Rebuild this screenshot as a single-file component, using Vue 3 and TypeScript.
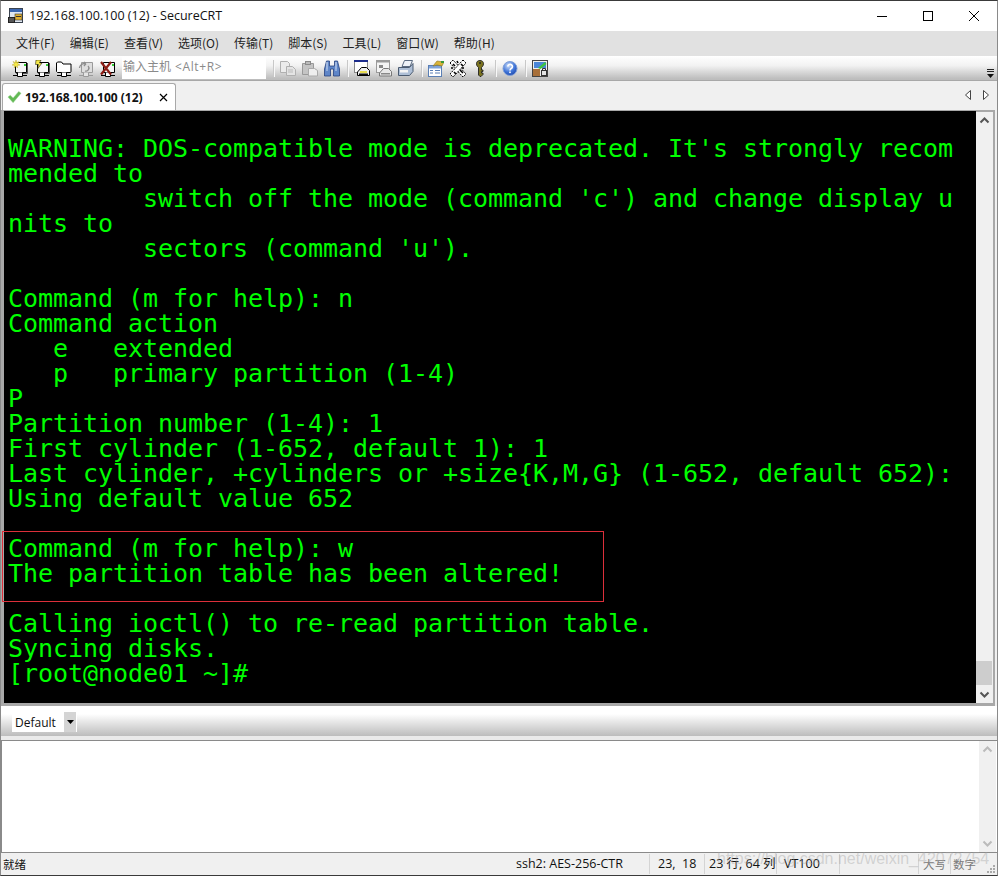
<script setup lang="ts">
const lines: string[] = [
  '',
  "WARNING: DOS-compatible mode is deprecated. It's strongly recom",
  'mended to',
  "         switch off the mode (command 'c') and change display u",
  'nits to',
  "         sectors (command 'u').",
  '',
  'Command (m for help): n',
  'Command action',
  '   e   extended',
  '   p   primary partition (1-4)',
  'P',
  'Partition number (1-4): 1',
  'First cylinder (1-652, default 1): 1',
  'Last cylinder, +cylinders or +size{K,M,G} (1-652, default 652):',
  'Using default value 652',
  '',
  'Command (m for help): w',
  'The partition table has been altered!',
  '',
  'Calling ioctl() to re-read partition table.',
  'Syncing disks.',
  '[root@node01 ~]#',
]
const menus = ['文件(F)', '编辑(E)', '查看(V)', '选项(O)', '传输(T)', '脚本(S)', '工具(L)', '窗口(W)', '帮助(H)']
</script>

<template>
  <div class="win">
    <header class="title">
      <svg class="appicon" width="16" height="16" viewBox="0 0 16 16">
        <rect x="1.5" y="0.5" width="13" height="14" fill="#dfe6ef" stroke="#39424f" />
        <rect x="2" y="1" width="12" height="3" fill="#3a66b0" />
        <rect x="7" y="6" width="7" height="6" fill="#e0b030" stroke="#333" stroke-width="0.6" />
        <rect x="8" y="8" width="5" height="1" fill="#333" />
        <rect x="0.5" y="9.5" width="6" height="5" fill="#555" stroke="#222" />
      </svg>
      <span class="title-text">192.168.100.100 (12) - SecureCRT</span>
      <div class="winbtns">
        <svg width="46" height="30" viewBox="0 0 46 30"><path d="M18 15.5h10" stroke="#000" /></svg>
        <svg width="46" height="30" viewBox="0 0 46 30"><rect x="18.5" y="10.5" width="9" height="9" fill="none" stroke="#000" /></svg>
        <svg width="46" height="30" viewBox="0 0 46 30"><path d="M18 10l10 10M28 10l-10 10" stroke="#000" /></svg>
      </div>
    </header>

    <nav class="menu">
      <span v-for="m in menus" :key="m" class="menu-item">{{ m }}</span>
    </nav>

    <div class="toolbar">
      <div class="group first">
        <svg class="tool" viewBox="0 0 16 17">
          <path d="M3.500 2.500h11v10h-11z" fill="#f6f6f6" stroke="#000" />
          <path d="M15.500 3v10.500H4" fill="none" stroke="#555" />
          <rect x="12" y="4" width="2" height="2" fill="#33cc33" />
          <path d="M1 15.500h14" stroke="#000" />
          <path d="M5.500 12.500v4h5v-4" fill="#fff" stroke="#000" />
          <path d="M4 0l.8 2.600L7 1.500 5.600 3.800 8 5 5.400 5.400 5.500 8 4 6 2.200 8l.3-2.600L0 5l2.500-1.200L1 1.500l2.200 1.100z" fill="#f6ea4a" stroke="#b09a20" stroke-width="0.400" />
        </svg>
        <svg class="tool" viewBox="0 0 16 17">
          <path d="M3.500 2.500h11v10h-11z" fill="#f6f6f6" stroke="#000" />
          <path d="M15.500 3v10.500H4" fill="none" stroke="#555" />
          <rect x="12" y="4" width="2" height="2" fill="#33cc33" />
          <path d="M1 15.500h14" stroke="#000" />
          <path d="M5.500 12.500v4h5v-4" fill="#fff" stroke="#000" />
          <path d="M2 0h5L5.500 3H8L3.500 9 4.500 4.500H1.500z" fill="#f6ea4a" stroke="#000" stroke-width="0.500" />
        </svg>
        <svg class="tool" viewBox="0 0 16 17">
          <path d="M.5 11.500v-8.500l1-1h4l1.500 2h8v7.500a1 1 0 0 1-1 1H1.500z" fill="#fff" stroke="#000" />
          <path d="M1 15.500h14" stroke="#000" />
          <path d="M5.500 12.500v4h5v-4" fill="#fff" stroke="#000" />
        </svg>
        <svg class="tool" viewBox="0 0 16 17">
          <path d="M3.500 2.500h11v10h-11z" fill="#dedede" stroke="#9a9a9a" />
          <path d="M1 15.500h14" stroke="#9a9a9a" />
          <path d="M5.500 12.500v4h5v-4" fill="#e4e4e4" stroke="#9a9a9a" />
          <path d="M1.500 8a4.500 4.500 0 0 1 6-4M8 3.500l-2-1.500M8 3.500L6 6M7 11a3 3 0 0 0 3-5" fill="none" stroke="#8c8c8c" stroke-width="1.300" />
        </svg>
        <svg class="tool" viewBox="0 0 16 17">
          <path d="M3.500 2.500h11v10h-11z" fill="#f6f6f6" stroke="#000" />
          <rect x="12" y="4" width="2" height="2" fill="#33cc33" />
          <path d="M1 15.500h14" stroke="#000" />
          <path d="M5.500 12.500v4h5v-4" fill="#fff" stroke="#000" />
          <path d="M1 2l10 12.500M11 2L1 14.500" stroke="#8c1c14" stroke-width="2.200" />
        </svg>
      </div>
      <div class="quick"><span>输入主机</span><span class="hint">&lt;Alt+R&gt;</span></div>
      <div class="group rest">
        <i class="sep" />
        <svg class="tool" viewBox="0 0 16 17">
          <path d="M.5 1.500h7l2 2v9H.5z" fill="#ececec" stroke="#b0b0b0" />
          <path d="M6.500 6.500h6l3 3v6h-9z" fill="#e4e4e4" stroke="#b0b0b0" />
          <path d="M8 10h5M8 12h5" stroke="#bbb" />
        </svg>
        <svg class="tool" viewBox="0 0 16 17">
          <path d="M.5 3.500h11v11H.5z" fill="#c4c4c4" stroke="#999" />
          <rect x="3.500" y="1.500" width="5" height="3" fill="#bbb" stroke="#8a8a8a" />
          <path d="M6.500 8.500h6l3 2v5.500h-9z" fill="#eee" stroke="#aaa" />
        </svg>
        <svg class="tool" viewBox="0 0 16 17">
          <path d="M2.500 1h3v5h5V1h3l2 8v7H9.500V9h-3v7H.5V9z" fill="#5f86c8" stroke="#27417e" stroke-width="0.800" />
          <path d="M3 2v7M12 2v7M2 10h2M11 10h2" stroke="#c8d8f0" stroke-width="1.200" />
        </svg>
        <i class="sep" />
        <svg class="tool" viewBox="0 0 16 17">
          <rect x=".5" y="1.500" width="13" height="11" fill="#fff" stroke="#8a8a8a" />
          <rect x="0" y="0" width="14" height="2" fill="#1c2c8c" />
          <path d="M7.500 7.500h5l3 3v5h-12v-3.500z" fill="#efefef" stroke="#000" />
          <rect x="6" y="11" width="7" height="2" fill="#e8dc50" />
          <rect x="5" y="13.500" width="9" height="1.500" fill="#111" />
        </svg>
        <svg class="tool" viewBox="0 0 16 17">
          <rect x=".5" y="1.500" width="13" height="11" fill="#f4f4f4" stroke="#9a9a9a" />
          <rect x="0" y="0" width="14" height="2.500" fill="#9a9a9a" />
          <rect x="3" y="5" width="4" height="3" fill="#888" />
          <path d="M7.500 8.500h5l3 3v4.500h-12v-3z" fill="#e8e8e8" stroke="#777" />
          <rect x="5" y="13" width="9" height="1.500" fill="#888" />
        </svg>
        <svg class="tool" viewBox="0 0 16 17">
          <path d="M6.500 .5h8l-2.500 6H4z" fill="#eef2f8" stroke="#5a6a80" />
          <path d="M.5 7.500h11l3.500-4v8l-3.500 4h-11z" fill="#aebfd6" stroke="#4a5a70" />
          <rect x="2" y="10" width="8" height="2.500" fill="#f4f4f4" />
        </svg>
        <i class="sep" />
        <svg class="tool" viewBox="0 0 16 17">
          <rect x=".5" y="5.500" width="13" height="11" fill="#fff" stroke="#5a7fb5" />
          <rect x="1" y="6" width="12" height="2.500" fill="#7fa3d8" />
          <path d="M2 10.500h3M7 10.500h5M2 13h3M7 13h5" stroke="#5a7fb5" />
          <path d="M5 6l4-5 7 1-2 4-5-1z" fill="#d9b437" stroke="#8c7420" stroke-width="0.600" />
          <rect x="13" y="1" width="3" height="2" fill="#3a9a3a" />
        </svg>
        <svg class="tool" viewBox="0 0 16 17">
          <path d="M0 3l3-3 13 14-3 3z" fill="#fff" stroke="#000" stroke-dasharray="2 1" />
          <path d="M13 0l3 3L3 17l-3-3z" fill="#fff" stroke="#000" stroke-dasharray="2 1" />
          <path d="M3 4l2 2M11 4l2 2M4 12l2 2M10 10l3 3M7 1l1 2M1 8h2M12 8h2" stroke="#000" stroke-width="1.600" />
        </svg>
        <svg class="tool" viewBox="0 0 16 17">
          <path d="M8 .5c2.200 0 3.500 1.300 3.500 3.300S10 7 9.500 7.500V10H11v1.500H9.500V13H11v1.500l-2 2H8L6.500 15V7.500C6 7 4.500 6 4.500 3.800S5.800.5 8 .5z" fill="#7c7420" stroke="#222" stroke-width="0.900" />
          <circle cx="8" cy="3" r="1" fill="#222" />
        </svg>
        <i class="sep" />
        <svg class="tool" viewBox="0 0 16 17">
          <defs>
            <radialGradient id="hb" cx="40%" cy="30%" r="75%">
              <stop offset="0" stop-color="#cfe0fa" />
              <stop offset="0.600" stop-color="#3f74d8" />
              <stop offset="1" stop-color="#1e46a8" />
            </radialGradient>
          </defs>
          <circle cx="8" cy="8.500" r="7" fill="url(#hb)" stroke="#7f9fd8" />
          <path d="M5.800 6.500a2.300 2.200 0 1 1 3.400 2c-.8.500-1.200 1-1.200 2" fill="none" stroke="#fff" stroke-width="1.600" />
          <rect x="7.200" y="11.500" width="1.600" height="1.600" fill="#fff" />
        </svg>
        <i class="sep" />
        <svg class="tool" viewBox="0 0 16 17">
          <rect x=".5" y=".5" width="15" height="16" fill="#eee" stroke="#444" />
          <rect x="2" y="2" width="12" height="6" fill="#4a86d8" />
          <path d="M6 8l7-6 1.500 2-6 5z" fill="#3ec43e" />
          <rect x="1" y="9" width="7" height="7" fill="#a8703a" />
          <rect x="9.500" y="10.500" width="5" height="5" fill="#e4e4e4" stroke="#333" />
          <path d="M10.500 10.500v-2h3v2" fill="none" stroke="#333" />
        </svg>
      </div>
      <svg class="chevron" width="9" height="12" viewBox="0 0 9 12">
        <path d="M1 1.500h7M1 3.500h7" stroke="#222" />
        <path d="M1 6h7l-3.500 4z" fill="#111" />
      </svg>
    </div>

    <div class="tabs">
      <div class="tab">
        <svg width="15" height="14" viewBox="0 0 16 14">
          <path d="M1 7l2.500-2 3 3 6-7L15 3 6.500 13z" fill="#62b954" stroke="#9bd591" stroke-width="0.500" />
        </svg>
        <span class="tab-label">192.168.100.100 (12)</span>
        <svg class="tab-x" width="9" height="9" viewBox="0 0 9 9"><path d="M1 1l7 7M8 1L1 8" stroke="#000" stroke-width="1.200" /></svg>
      </div>
      <div class="tab-nav">
        <svg width="8" height="11" viewBox="0 0 8 11"><path d="M6.500 .5v9l-5-4.500z" fill="#fff" stroke="#444" /></svg>
        <svg width="8" height="11" viewBox="0 0 8 11"><path d="M1.500 .5v9l5-4.500z" fill="#fff" stroke="#444" /></svg>
      </div>
    </div>

    <section class="term-frame">
      <pre class="term"><template v-for="(l, i) in lines" :key="i">{{ l }}
</template></pre>
      <div class="scroll">
        <svg width="17" height="17" viewBox="0 0 17 17"><path d="M4.500 10.500l4-4 4 4" fill="none" stroke="#555" stroke-width="2" /></svg>
        <div class="track"><div class="thumb" /></div>
        <svg width="17" height="17" viewBox="0 0 17 17"><path d="M4.500 6.500l4 4 4-4" fill="none" stroke="#555" stroke-width="2" /></svg>
      </div>
      <div class="mark" />
    </section>

    <div class="session-bar">
      <div class="combo">
        <span>Default</span>
        <span class="combo-btn"><svg width="7" height="4" viewBox="0 0 7 4"><path d="M0 0h7L3.500 4z" fill="#000" /></svg></span>
      </div>
    </div>

    <section class="input">
      <div class="scroll light">
        <svg width="17" height="17" viewBox="0 0 17 17"><path d="M4.500 10.500l4-4 4 4" fill="none" stroke="#bbb" stroke-width="2" /></svg>
        <div class="track" />
        <svg width="17" height="17" viewBox="0 0 17 17"><path d="M4.500 6.500l4 4 4-4" fill="none" stroke="#bbb" stroke-width="2" /></svg>
      </div>
    </section>

    <footer class="status">
      <span class="st-main">就绪</span>
      <span class="cell c1">ssh2: AES-256-CTR</span>
      <span class="cell c2">23,&nbsp; 18</span>
      <span class="cell c3">23 行, 64 列</span>
      <span class="cell c4">VT100</span>
      <span class="cell c5" />
      <span class="cell c6 dim">大写</span>
      <span class="cell c7 dim">数字</span>
      <svg class="grip" width="12" height="12" viewBox="0 0 12 12">
        <path d="M9 2h2v2H9zM6 5h2v2H6zM9 5h2v2H9zM3 8h2v2H3zM6 8h2v2H6zM9 8h2v2H9z" fill="#aaa" />
      </svg>
      <span class="watermark">https://blog.csdn.net/weixin_42072754</span>
    </footer>
  </div>
</template>

<style>
html, body { margin: 0; background: #f0f0f0; }
</style>

<style scoped>
.win {
  width: 998px;
  height: 876px;
  box-sizing: border-box;
  display: flex;
  flex-direction: column;
  overflow: hidden;
  background: #f0f0f0;
  border: 1px solid #8a8a8a;
  border-top-color: #3a3a3a;
  border-bottom-color: #3a3a3a;
  font-family: "Noto Sans CJK SC", "Noto Sans", sans-serif;
  font-size: 12px;
  color: #222;
}
.title {
  height: 30px;
  flex: none;
  display: flex;
  align-items: center;
  padding-left: 7px;
  background: #fff;
}
.appicon { flex: none; }
.title-text {
  margin: -2px 0 0 5px;
  font-family: "Open Sans", sans-serif;
  font-size: 12.5px;
  color: #111;
}
.winbtns { margin-left: auto; display: flex; }
.menu {
  height: 25px;
  flex: none;
  display: flex;
  align-items: center;
  padding: 0 0 2px 15px;
  box-sizing: border-box;
  gap: 15px;
  background: #e1e1e1;
}
.menu-item { font-size: 12px; color: #222; white-space: nowrap; }
.toolbar {
  height: 25px;
  flex: none;
  box-sizing: border-box;
  position: relative;
  display: flex;
  align-items: center;
  padding-left: 11px;
  background: linear-gradient(#fff 0%, #f2f2f2 40%, #bdbdbd 95%);
  border-bottom: 1px solid #a8a8a8;
}
.group { display: flex; align-items: center; gap: 6px; }
.rest { margin-left: 6px; }
.tool { width: 16px; height: 17px; flex: none; }
.quick {
  width: 144px;
  height: 22px;
  margin-left: 6px;
  padding-left: 1px;
  box-sizing: border-box;
  background: #fff;
  color: #8a8a8a;
  font-size: 12px;
  line-height: 18px;
  white-space: nowrap;
}
.hint { margin-left: 4px; font-family: "Open Sans", sans-serif; font-size: 12px; letter-spacing: 0.6px; }
.sep {
  width: 1px;
  height: 17px;
  background: #c8c8c8;
  border-right: 1px solid #f8f8f8;
  margin: 0 -1px 0 1px;
}
.chevron { position: absolute; right: 2px; bottom: 0; }
.tabs {
  height: 29px;
  flex: none;
  display: flex;
  align-items: flex-end;
  padding: 0 0 0 1px;
  background: #f0f0f0;
}
.tab {
  width: 174px;
  height: 27px;
  box-sizing: border-box;
  display: flex;
  align-items: center;
  padding-left: 4px;
  gap: 3px;
  background: #fff;
  border: 1px solid #a8a8a8;
  border-bottom: 0;
  border-radius: 3px 3px 0 0;
}
.tab-label {
  font-family: "Open Sans", sans-serif;
  font-weight: 700;
  font-size: 12px;
  color: #111;
  white-space: nowrap;
}
.tab-x { margin-left: auto; margin-right: 7px; }
.tab-nav {
  margin-left: auto;
  align-self: center;
  display: flex;
  gap: 10px;
  padding-right: 7px;
}
.term-frame {
  height: 596px;
  flex: none;
  box-sizing: border-box;
  position: relative;
  display: flex;
  background: #000;
  border: 2px solid #a8a8a8;
  border-left-width: 3px;
  border-bottom-width: 3px;
  margin-right: 2px;
}
.term {
  flex: 1;
  margin: -1px 0 0;
  padding: 0 0 0 4px;
  overflow: hidden;
  background: #000;
  color: #00ff00;
  font-family: "DejaVu Sans Mono", monospace;
  font-size: 25px;
  line-height: 25px;
  letter-spacing: -0.05px;
  white-space: pre;
}
.scroll {
  width: 17px;
  flex: none;
  display: flex;
  flex-direction: column;
  background: #f0f0f0;
}
.track { flex: 1; position: relative; }
.thumb {
  position: absolute;
  left: 0;
  right: 1px;
  bottom: 1px;
  height: 24px;
  background: #cdcdcd;
}
.mark {
  position: absolute;
  left: -2px;
  top: 419px;
  width: 602px;
  height: 71px;
  box-sizing: border-box;
  border: 1px solid #dc2f3a;
  pointer-events: none;
}
.session-bar {
  height: 34px;
  flex: none;
  box-sizing: border-box;
  display: flex;
  align-items: flex-start;
  padding: 6px 0 0 11px;
  background: linear-gradient(#fff 0, #fff 8px, #bcbcbc 30px, #eaeaea 30px);
}
.combo {
  width: 65px;
  height: 20px;
  display: flex;
  align-items: center;
  justify-content: space-between;
  background: #fff;
  font-family: "Open Sans", sans-serif;
  font-size: 12px;
  color: #111;
  padding-left: 3px;
  box-sizing: border-box;
  border-right: 1px solid #fff;
}
.combo-btn {
  width: 12px;
  height: 20px;
  display: flex;
  align-items: center;
  justify-content: center;
  background: #d4d4d4;
}
.input {
  height: 112px;
  flex: none;
  box-sizing: border-box;
  display: flex;
  justify-content: flex-end;
  padding-right: 1px;
  background: #fff;
  border-top: 1px solid #8a8a8a;
  border-left: 1px solid #8a8a8a;
}
.status {
  flex: 1;
  position: relative;
  display: flex;
  align-items: center;
  box-sizing: border-box;
  border-top: 1px solid #8a8a8a;
  background: #f0f0f0;
  font-family: "Open Sans", "Noto Sans CJK SC", sans-serif;
  font-size: 12.5px;
  color: #111;
}
.st-main { width: 506px; padding-left: 2px; box-sizing: border-box; flex: none; font-family: "Noto Sans CJK SC", sans-serif; font-size: 11.5px; }
.cell {
  flex: none;
  box-sizing: border-box;
  height: 20px;
  line-height: 20px;
  padding-left: 4px;
  white-space: nowrap;
  border-right: 1px solid #d4d4d4;
}
.c1 { width: 143px; padding-left: 9px; }
.c2 { width: 55px; padding-left: 8px; }
.c3 { width: 72px; }
.c4 { width: 63px; padding-left: 7px; }
.c5 { width: 79px; }
.c6 { width: 32px; padding-left: 4px; }
.c7 { width: 35px; padding-left: 2px; border-right: 0; }
.dim { color: #777; font-family: "Noto Sans CJK SC", sans-serif; font-size: 11.5px; }
.grip { position: absolute; right: 1px; bottom: 0; }
.watermark {
  position: absolute;
  left: 716px;
  top: -3px;
  font-family: "Liberation Sans", sans-serif;
  font-size: 16px;
  color: rgba(160, 160, 160, 0.4);
  white-space: nowrap;
  pointer-events: none;
}
</style>
